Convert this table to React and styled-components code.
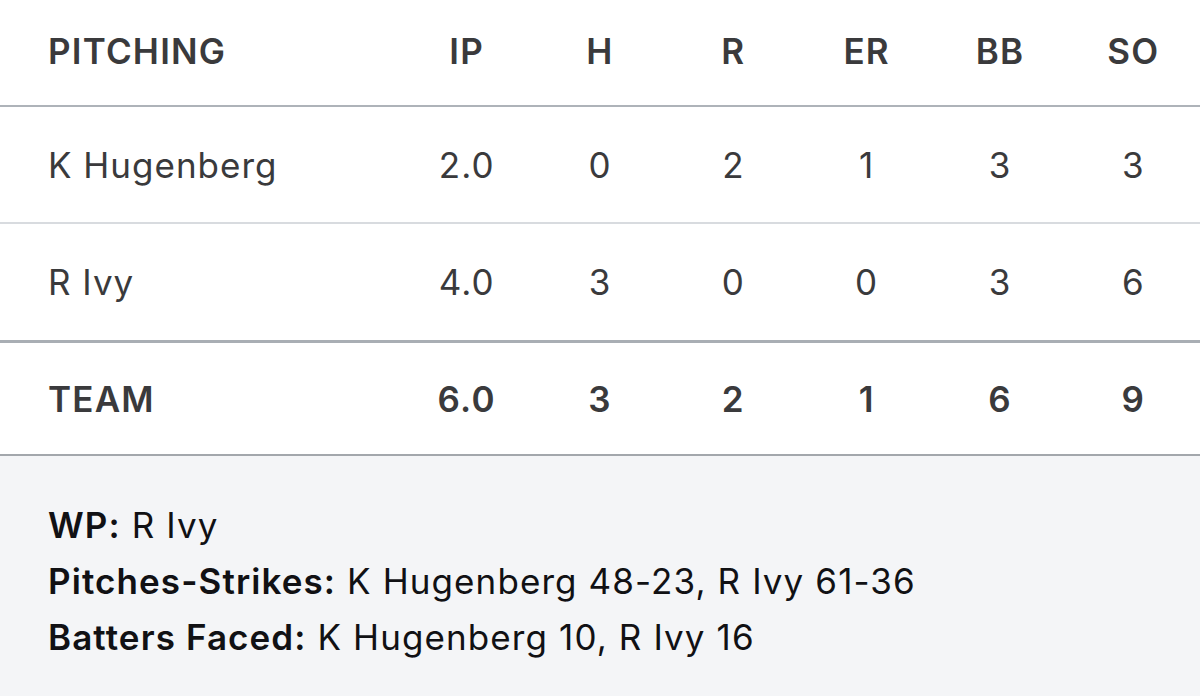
import React from "react";
import styled, { createGlobalStyle } from "styled-components";

const Global = createGlobalStyle`
  html, body { margin: 0; padding: 0; background: #ffffff; }
  body { font-family: Inter, "Noto Sans", "Liberation Sans", sans-serif; }
  * { box-sizing: border-box; }
`;

const Page = styled.div`
  width: 1200px;
  height: 696px;
  display: flex;
  flex-direction: column;
  background: #ffffff;
  overflow: hidden;
`;

const Row = styled.div`
  display: grid;
  grid-template-columns: 400px repeat(6, 1fr);
  align-items: center;
  height: ${(p) => p.$h}px;
  padding-bottom: ${(p) => p.$pb || 0}px;
  border-bottom: ${(p) => p.$bw}px solid ${(p) => p.$bc};
  color: #3a3a3c;
  font-size: 35px;
  letter-spacing: ${(p) => (p.$bold ? 1.2 : 1)}px;
  font-weight: ${(p) => (p.$bold ? 600 : 400)};
`;

const NameCell = styled.div`
  padding-left: 48px;
  white-space: nowrap;
`;

const StatCell = styled.div`
  text-align: center;
`;

const Footer = styled.div`
  flex: 1;
  background: #f4f5f7;
  padding: 41px 48px 0;
  color: #111114;
  font-size: 35px;
  letter-spacing: 1.1px;
  line-height: 56px;
`;

const Line = styled.div`
  white-space: nowrap;
`;

const Label = styled.span`
  font-weight: 600;
`;

const cols = ["IP", "H", "R", "ER", "BB", "SO"];
const pitchers = [
  { name: "K Hugenberg", stats: ["2.0", "0", "2", "1", "3", "3"] },
  { name: "R Ivy", stats: ["4.0", "3", "0", "0", "3", "6"] },
];

export default function App() {
  return (
    <Page>
      <Global />
      <Row $h={107} $pb={4} $bw={2} $bc="#aeb3b9" $bold>
        <NameCell>PITCHING</NameCell>
        {cols.map((c) => (
          <StatCell key={c}>{c}</StatCell>
        ))}
      </Row>
      <Row $h={117} $bw={2} $bc="#d8dbdf">
        <NameCell>{pitchers[0].name}</NameCell>
        {pitchers[0].stats.map((s, i) => (
          <StatCell key={i}>{s}</StatCell>
        ))}
      </Row>
      <Row $h={119} $bw={3} $bc="#a9aeb4">
        <NameCell>{pitchers[1].name}</NameCell>
        {pitchers[1].stats.map((s, i) => (
          <StatCell key={i}>{s}</StatCell>
        ))}
      </Row>
      <Row $h={113} $bw={2} $bc="#a3a7ac" $bold>
        <NameCell>TEAM</NameCell>
        {["6.0", "3", "2", "1", "6", "9"].map((s, i) => (
          <StatCell key={i}>{s}</StatCell>
        ))}
      </Row>
      <Footer>
        <Line>
          <Label>WP:</Label> R Ivy
        </Line>
        <Line>
          <Label>Pitches-Strikes:</Label> K Hugenberg 48-23, R Ivy 61-36
        </Line>
        <Line>
          <Label>Batters Faced:</Label> K Hugenberg 10, R Ivy 16
        </Line>
      </Footer>
    </Page>
  );
}
